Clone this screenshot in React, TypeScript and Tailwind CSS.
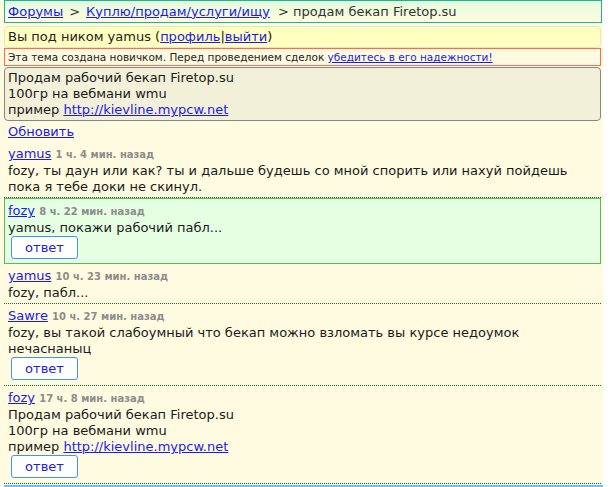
import React from "react";

const Link = ({ children }: { children: React.ReactNode }) => (
  <a href="#" className="text-[#1a1af0] underline">
    {children}
  </a>
);

const ReplyBtn = () => (
  <button className="mt-0 mb-[3px] ml-[3px] h-[23px] w-[67px] rounded-[3px] border border-[#3d95f5] bg-white text-[13px] leading-[16px] text-[#2020d8] font-['DejaVu_Sans',sans-serif]">
    ответ
  </button>
);

type C = {
  user: string;
  time: string;
  lines: React.ReactNode[];
  reply?: boolean;
  green?: boolean;
};

const Comment = ({ c }: { c: C }) => (
  <div
    className={
      c.green
        ? "border border-[#5cb85c] bg-[#e6ffe3] pl-[3px] pt-[4px] pb-[1px]"
        : "border-b border-dotted border-[#0f6b3c] pl-[4px] pt-[4px] pb-[2px]"
    }
  >
    <div className="h-[17px] leading-[16px]">
      <Link>{c.user}</Link>{" "}
      <span className="text-[10px] font-bold text-[#8c8c8c]">{c.time}</span>
    </div>
    <div className="leading-[16px] text-[#1a1a1a]">
      {c.lines.map((l, i) => (
        <div key={i}>{l}</div>
      ))}
    </div>
    {c.reply && <ReplyBtn />}
  </div>
);

const comments: C[] = [
  {
    user: "yamus",
    time: "1 ч. 4 мин. назад",
    lines: [
      "fozy, ты даун или как? ты и дальше будешь со мной спорить или нахуй пойдешь",
      "пока я тебе доки не скинул.",
    ],
  },
  {
    user: "fozy",
    time: "8 ч. 22 мин. назад",
    lines: ["yamus, покажи рабочий пабл..."],
    reply: true,
    green: true,
  },
  {
    user: "yamus",
    time: "10 ч. 23 мин. назад",
    lines: ["fozy, пабл..."],
  },
  {
    user: "Sawre",
    time: "10 ч. 27 мин. назад",
    lines: [
      "fozy, вы такой слабоумный что бекап можно взломать вы курсе недоумок",
      "нечаснаныц",
    ],
    reply: true,
  },
  {
    user: "fozy",
    time: "17 ч. 8 мин. назад",
    lines: [
      "Продам рабочий бекап Firetop.su",
      "100гр на вебмани wmu",
      <>
        пример <Link>http://kievline.mypcw.net</Link>
      </>,
    ],
    reply: true,
  },
];

export default function App() {
  return (
    <div className="w-[603px] min-h-[487px] bg-[#fffbe0] pl-[4px] font-['DejaVu_Sans',sans-serif] text-[13px] text-[#222]">
      <div className="mr-[1px] flex h-[23px] items-center border border-[#1fb0a0] bg-gradient-to-b from-[#e3fcdc] to-[#fffbe0] px-[3px] leading-[16px] text-[#333]">
        <Link>Форумы</Link>
        <span className="mx-[6px]">&gt;</span>
        <Link>Куплю/продам/услуги/ищу</Link>
        <span className="ml-[8px]">&gt; продам бекап Firetop.su</span>
      </div>
      <div className="mt-[3px] mr-[2px] flex h-[22px] items-center rounded-[4px] border border-[#e6e2c4] bg-[#ffffc0] px-[3px] leading-[16px] text-[#222]">
        <span>
          Вы под ником yamus (<Link>профиль</Link>|<Link>выйти</Link>)
        </span>
      </div>
      <div className="mr-[2px] flex h-[18px] items-center border border-[#ff6a4f] px-[3px] text-[10.5px] leading-[12px] text-[#222]">
        <span>
          Эта тема создана новичком. Перед проведением сделок{" "}
          <Link>убедитесь в его надежности!</Link>
        </span>
      </div>
      <div className="mt-[1px] mr-[2px] rounded-[4px] border border-[#868686] bg-[#f3f0d9] px-[3px] pt-[2px] pb-[2px] leading-[16px] text-[#1a1a1a]">
        <div>Продам рабочий бекап Firetop.su</div>
        <div>100гр на вебмани wmu</div>
        <div>
          пример <Link>http://kievline.mypcw.net</Link>
        </div>
      </div>
      <div className="mt-[3px] mb-[2px] pl-[4px] leading-[16px]">
        <Link>Обновить</Link>
      </div>
      <div className="mr-[2px]">
        {comments.map((c, i) => (
          <Comment key={i} c={c} />
        ))}
      </div>
      <div className="mt-[1px] h-[2px] bg-[#6ec1ff]" />
    </div>
  );
}
